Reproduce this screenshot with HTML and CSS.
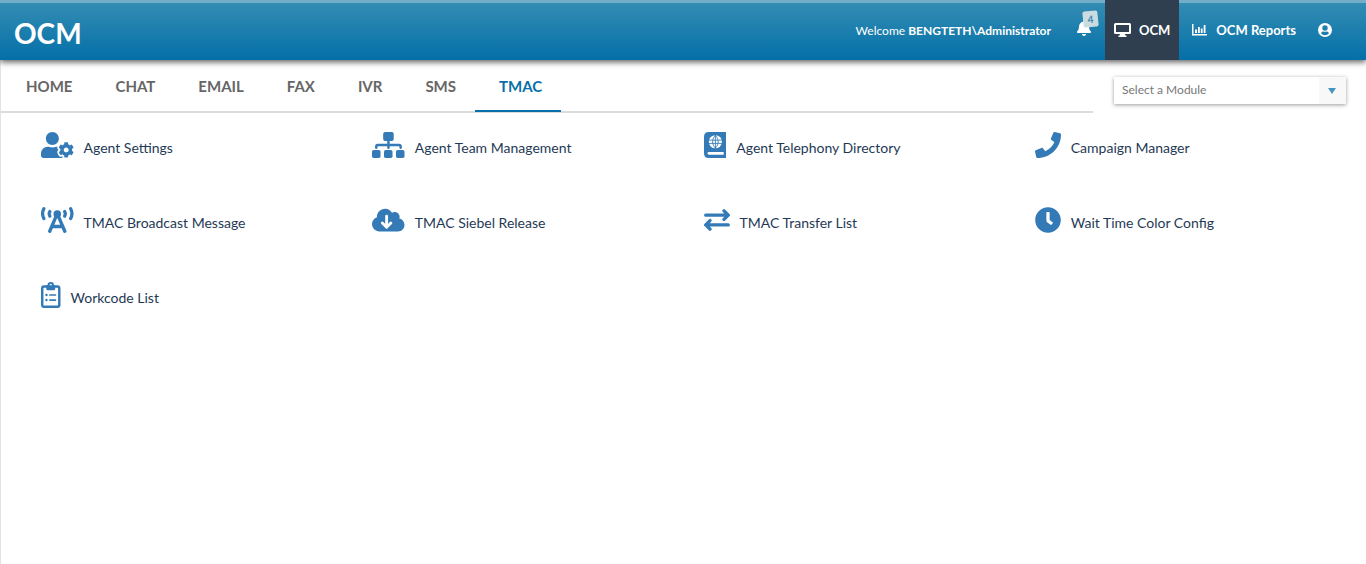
FILE: index.html
```html
<!DOCTYPE html>
<html lang="en">
<head>
<meta charset="utf-8">
<title>OCM</title>
<link rel="stylesheet" href="styles.css">
</head>
<body>
<header class="topbar">
  <a class="brand" href="#">OCM</a>
  <span class="welcome">Welcome <strong>BENGTETH\Administrator</strong></span>
  <button class="alerts" type="button" aria-label="Notifications">
    <svg class="bell" viewBox="0 0 448 512"><path d="M224 512c35.32 0 63.97-28.65 63.97-64H160.03c0 35.35 28.65 64 63.97 64zm215.39-149.71c-19.32-20.76-55.47-51.99-55.47-154.29 0-77.7-54.48-139.9-127.94-155.16V32c0-17.67-14.32-32-31.98-32s-31.98 14.33-31.98 32v20.84C118.56 68.1 64.08 130.3 64.08 208c0 102.3-36.15 133.53-55.47 154.29-6 6.45-8.66 14.16-8.61 21.71.11 16.4 12.98 32 32.1 32h383.8c19.12 0 32-15.6 32.1-32 .05-7.55-2.61-15.27-8.61-21.71z"/></svg>
    <span class="badge">4</span>
  </button>
  <nav class="apps" aria-label="Applications">
    <a class="app app-active" href="#">
      <svg class="app-icon" viewBox="0 0 17 16"><path fill-rule="evenodd" d="M1.5 1h14A1.5 1.5 0 0 1 17 2.500v8A1.500 1.500 0 0 1 15.500 12H11l.4 1.500h1.100v1.500h-8v-1.500h1.100L6 12H1.500A1.500 1.500 0 0 1 0 10.500v-8A1.500 1.500 0 0 1 1.500 1zM2 3v7h13V3z"/></svg>
      OCM
    </a>
    <a class="app" href="#">
      <svg class="app-icon" viewBox="0 0 16 16"><path d="M.5 2H2v10h13.500v1.500H.500zM3.500 7.500h2V11h-2zM6.500 5h1.800v6H6.500zM9.300 6.500h1.800V11H9.300zM12.200 3H14v8h-1.800z"/></svg>
      OCM Reports
    </a>
    <a class="app" href="#" aria-label="Account">
      <svg class="user-icon" viewBox="0 0 14 14"><path fill-rule="evenodd" d="M7 0a7 7 0 1 1 0 14A7 7 0 0 1 7 0zm0 2.300a2.700 2.700 0 1 0 0 5.400 2.700 2.700 0 0 0 0-5.400zM3 10.300a5 5 0 0 0 8 0C10.500 9 9.500 8.500 8.600 8.500a5 5 0 0 1-3.200 0C4.500 8.500 3.500 9 3 10.300z"/></svg>
    </a>
  </nav>
</header>
<main class="page">
  <div class="toolbar">
    <nav class="tabs" aria-label="Sections">
      <a class="tab" href="#">HOME</a>
      <a class="tab" href="#">CHAT</a>
      <a class="tab" href="#">EMAIL</a>
      <a class="tab" href="#">FAX</a>
      <a class="tab" href="#">IVR</a>
      <a class="tab" href="#">SMS</a>
      <a class="tab tab-active" href="#" aria-current="page">TMAC</a>
    </nav>
    <div class="picker">
      <select class="module" aria-label="Module"><option>Select a Module</option></select>
      <svg class="caret" viewBox="0 0 8 6"><path d="M0 0h8L4 6z"/></svg>
    </div>
  </div>
  <div class="modules">
    <a class="item" href="#">
      <svg class="icon" viewBox="0 0 640 512"><path d="M610.5 373.3c2.6-14.1 2.6-28.5 0-42.6l25.8-14.9c3-1.7 4.3-5.2 3.3-8.5-6.7-21.6-18.2-41.2-33.2-57.4-2.3-2.5-6-3.1-9-1.400l-25.800 14.900c-10.900-9.300-23.400-16.500-36.900-21.300v-29.800c0-3.400-2.400-6.400-5.700-7.100-22.300-5-45-4.800-66.200 0-3.300.7-5.700 3.700-5.700 7.100v29.800c-13.500 4.800-26 12-36.900 21.300l-25.800-14.900c-2.900-1.700-6.700-1.100-9 1.400-15 16.200-26.500 35.800-33.200 57.400-1 3.300.4 6.800 3.300 8.500l25.800 14.900c-2.600 14.100-2.600 28.500 0 42.600l-25.800 14.900c-3 1.700-4.300 5.200-3.300 8.500 6.700 21.600 18.200 41.100 33.200 57.400 2.300 2.500 6 3.100 9 1.400l25.800-14.900c10.900 9.300 23.400 16.500 36.900 21.300v29.800c0 3.400 2.400 6.400 5.700 7.100 22.300 5 45 4.800 66.200 0 3.300-.7 5.700-3.700 5.700-7.100v-29.800c13.500-4.800 26-12 36.900-21.300l25.800 14.900c2.900 1.700 6.700 1.100 9-1.400 15-16.200 26.500-35.800 33.200-57.400 1-3.300-.4-6.800-3.300-8.500l-25.800-14.900zM496 400.500c-26.800 0-48.500-21.800-48.500-48.500s21.800-48.500 48.500-48.500 48.500 21.800 48.500 48.500-21.700 48.500-48.500 48.500zM224 256c70.700 0 128-57.300 128-128S294.700 0 224 0 96 57.300 96 128s57.300 128 128 128zm201.200 226.500c-2.300-1.200-4.600-2.600-6.800-3.900l-7.900 4.600c-6 3.400-12.800 5.300-19.600 5.300-10.900 0-21.400-4.600-28.900-12.600-18.300-19.800-32.300-43.900-40.200-69.600-5.500-17.700 1.900-36.400 17.900-45.700l7.900-4.600c-.1-2.600-.1-5.200 0-7.800l-7.900-4.600c-16-9.200-23.400-28-17.900-45.700.9-2.900 2.200-5.800 3.200-8.700-3.800-.3-7.500-1.200-11.400-1.200h-16.700c-22.200 10.200-46.900 16-72.900 16s-50.600-5.800-72.900-16h-16.700C60.200 288 0 348.200 0 422.400V464c0 26.500 21.500 48 48 48h352c10.100 0 19.500-3.200 27.200-8.500-1.200-3.800-2-7.700-2-11.800v-9.200z"/></svg>
      <span class="label">Agent Settings</span>
    </a>
    <a class="item" href="#">
      <svg class="icon" viewBox="0 0 640 512"><rect x="220" y="0" width="208" height="176" rx="40"/><rect x="0" y="352" width="168" height="160" rx="36"/><rect x="236" y="352" width="168" height="160" rx="36"/><rect x="472" y="352" width="168" height="160" rx="36"/><path class="line" stroke-width="48" d="M324 140v170M84 310v-22q0-32 32-32h416q32 0 32 32v22"/></svg>
      <span class="label">Agent Team Management</span>
    </a>
    <a class="item" href="#">
      <svg class="icon" viewBox="0 0 448 512"><path fill-rule="evenodd" d="M96 0h328q24 0 24 24v336q0 16-13 23v66q13 5 13 26v13q0 24-24 24H96Q0 512 0 416V96Q0 0 96 0zm0 392a28 28 0 0 0 0 56h292v-56z"/><circle class="cut" cx="224" cy="192" r="130"/><path class="line" stroke-width="17" d="M100 160h248M100 224h248M224 68v248M224 68c-76 72-76 176 0 248M224 68c76 72 76 176 0 248"/></svg>
      <span class="label">Agent Telephony Directory</span>
    </a>
    <a class="item" href="#">
      <svg class="icon" viewBox="0 0 512 512"><path d="M493.400 24.600l-104-24c-11.300-2.600-22.900 3.300-27.500 13.900l-48 112c-4.200 9.800-1.400 21.300 6.900 28l60.600 49.600c-36 76.700-98.900 140.500-177.200 177.200l-49.600-60.600c-6.800-8.300-18.200-11.100-28-6.900l-112 48C3.900 366.500-2 378.100.6 389.400l24 104C27.100 504.200 36.700 512 48 512c256.100 0 464-207.500 464-464 0-11.200-7.700-20.900-18.600-23.400z"/></svg>
      <span class="label">Campaign Manager</span>
    </a>
    <a class="item" href="#">
      <svg class="icon" viewBox="0 0 640 512"><circle cx="320" cy="136" r="74"/><path class="line" stroke-width="66" d="M172 478L320 130 468 478M230 384h180"/><path class="line" stroke-width="64" d="M56 34c-32 62-32 132 0 194M584 34c32 62 32 132 0 194M174 90q-26 45 0 90M466 90q26 45 0 90"/></svg>
      <span class="label">TMAC Broadcast Message</span>
    </a>
    <a class="item" href="#">
      <svg class="icon" viewBox="0 0 640 512"><path d="M537.600 226.600c4.100-10.700 6.400-22.400 6.400-34.600 0-53-43-96-96-96-19.700 0-38.100 6-53.300 16.200C367 64.200 315.300 32 256 32c-88.400 0-160 71.600-160 160 0 2.700.1 5.400.2 8.100C40.200 219.800 0 273.200 0 336c0 79.500 64.500 144 144 144h368c70.700 0 128-57.300 128-128 0-61.900-44-113.600-102.400-125.400z"/><path class="line cut-line" stroke-width="56" d="M288 180v210M204 314l84 84 84-84"/></svg>
      <span class="label">TMAC Siebel Release</span>
    </a>
    <a class="item" href="#">
      <svg class="icon" viewBox="0 0 512 512"><path class="line" stroke-width="66" d="M34 160h436M394 76l84 84-84 84M478 352H42M118 268l-84 84 84 84"/></svg>
      <span class="label">TMAC Transfer List</span>
    </a>
    <a class="item" href="#">
      <svg class="icon" viewBox="0 0 512 512"><path d="M256 4C117 4 4 117 4 256s113 252 252 252 252-113 252-252S395 4 256 4zm92.500 317l-20 25a16 16 0 0 1-22.500 2.500l-67-49.700a40 40 0 0 1-15-31.300V112a16 16 0 0 1 16-16h32a16 16 0 0 1 16 16v144l58 42.500a16 16 0 0 1 2.500 22.500z"/></svg>
      <span class="label">Wait Time Color Config</span>
    </a>
    <a class="item" href="#">
      <svg class="icon" viewBox="0 0 384 512"><rect class="line" stroke-width="48" x="24" y="88" width="336" height="400" rx="34"/><path fill-rule="evenodd" d="M104 64h24a64 64 0 0 1 128 0h24v76q0 20-20 20H124q-20 0-20-20zm88-24a24 24 0 1 0 0 48 24 24 0 0 0 0-48z"/><circle cx="108" cy="256" r="24"/><circle cx="108" cy="356" r="24"/><path class="line" stroke-width="34" d="M176 256h108M176 356h108"/></svg>
      <span class="label">Workcode List</span>
    </a>
  </div>
</main>
</body>
</html>
```
FILE: styles.css
```css
* { box-sizing: border-box; }

body {
  margin: 0;
  min-height: 100vh;
  display: flex;
  flex-direction: column;
  background: #fff;
  font-family: Lato, "Open Sans", sans-serif;
  font-size: 14px;
}

a { color: inherit; text-decoration: none; }

.topbar {
  display: flex;
  align-items: center;
  height: 60px;
  padding-left: 14px;
  padding-right: 24px;
  color: #fff;
  fill: #fff;
  background: linear-gradient(#73adc9 3px, #338cb3 3px, #0470a8);
  box-shadow: 0 2px 6px rgba(0, 0, 0, 0.65);
  position: relative;
}

.brand {
  margin-right: auto;
  padding-top: 6px;
  font-size: 28px;
  font-weight: 700;
}

.welcome { font-size: 12px; }

.alerts {
  position: relative;
  display: flex;
  width: 54px;
  height: 60px;
  padding: 20px 0 0 26px;
  border: 0;
  background: none;
  fill: #fff;
}

.bell { width: 14px; height: 16px; }

.badge {
  position: absolute;
  top: 11px;
  left: 32px;
  width: 15px;
  height: 16px;
  border-radius: 2px;
  background: #cbdbe2;
  color: #3d88b0;
  font: 700 10px/16px Lato, sans-serif;
  text-align: center;
  transform: rotate(-6deg);
}

.apps { display: flex; font-size: 13px; font-weight: 700; }

.app {
  display: flex;
  align-items: center;
  gap: 8px;
  height: 60px;
  padding: 0 10px 0 12px;
}

.app-active { padding: 0 9px; background: #2f3f50; }
.app-icon { width: 17px; height: 16px; }
.user-icon { width: 14px; height: 14px; }

.page { flex: 1; border-left: 1px solid #dfe4e9; }

.toolbar {
  display: flex;
  align-items: flex-start;
}

.tabs {
  display: flex;
  width: 80%;
  height: 53px;
  padding-left: 1px;
  border-bottom: 2px solid #dcdcdc;
}

.tab {
  height: 52px;
  padding: 16px 19px 0 24px;
  color: #666;
  font-size: 15px;
  font-weight: 700;
  line-height: 20px;
}

.tab-active { color: #0871a9; border-bottom: 2px solid #0871a9; }

.picker {
  position: relative;
  flex: 1;
  margin: 17px 20px 0 21px;
}

.module {
  display: block;
  appearance: none;
  width: 100%;
  height: 27px;
  padding: 0 8px 2px;
  border: 0;
  border-radius: 0;
  background: linear-gradient(to left, #f8f8f8 27px, #fff 27px);
  box-shadow: 0 1px 4px rgba(0, 0, 0, 0.4);
  color: #777;
  font: 12px Lato, sans-serif;
}

.caret {
  position: absolute;
  top: 11px;
  right: 10px;
  width: 8px;
  height: 6px;
  fill: #4596bf;
  pointer-events: none;
}

.modules {
  display: grid;
  grid-template-columns: repeat(4, 1fr);
  row-gap: 49px;
  padding: 19px 20px;
}

.item {
  display: flex;
  align-items: center;
  gap: 10px;
  height: 26px;
  padding-left: 20px;
  color: #1f3a56;
}

.icon { height: 26px; fill: #337ab7; stroke: none; }
.label { padding-top: 5px; line-height: 20px; }

.line {
  fill: none;
  stroke: #337ab7;
  stroke-linecap: round;
  stroke-linejoin: round;
}

.cut { fill: #fff; }
.cut-line { stroke: #fff; }
```
